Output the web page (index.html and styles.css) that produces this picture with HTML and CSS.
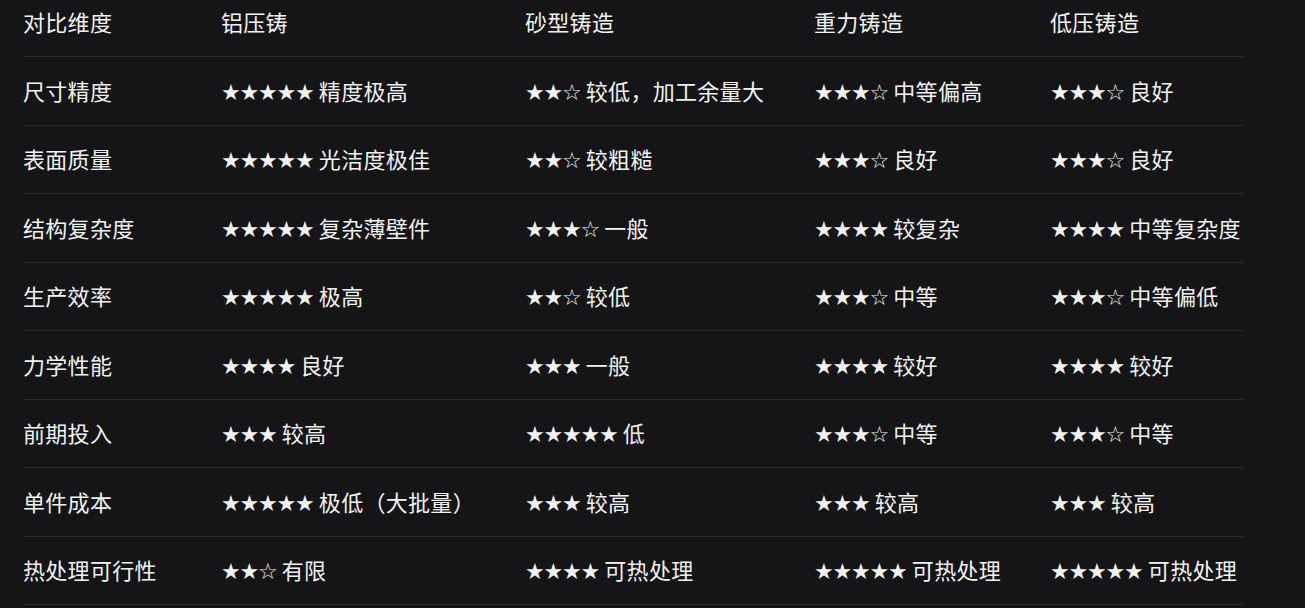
FILE: index.html
```html
<!DOCTYPE html>
<html lang="zh-CN">
<head>
<meta charset="utf-8">
<title>铸造工艺对比</title>
<link rel="stylesheet" href="styles.css">
</head>
<body>
<div class="page">
<table class="cmp">
  <colgroup>
    <col class="c1"><col class="c2"><col class="c3"><col class="c4"><col class="c5">
  </colgroup>
  <thead>
    <tr><th>对比维度</th><th>铝压铸</th><th>砂型铸造</th><th>重力铸造</th><th>低压铸造</th></tr>
  </thead>
  <tbody>
    <tr><td>尺寸精度</td><td><span class="s">★★★★★</span> 精度极高</td><td><span class="s">★★☆</span> 较低，加工余量大</td><td><span class="s">★★★☆</span> 中等偏高</td><td><span class="s">★★★☆</span> 良好</td></tr>
    <tr><td>表面质量</td><td><span class="s">★★★★★</span> 光洁度极佳</td><td><span class="s">★★☆</span> 较粗糙</td><td><span class="s">★★★☆</span> 良好</td><td><span class="s">★★★☆</span> 良好</td></tr>
    <tr><td>结构复杂度</td><td><span class="s">★★★★★</span> 复杂薄壁件</td><td><span class="s">★★★☆</span> 一般</td><td><span class="s">★★★★</span> 较复杂</td><td><span class="s">★★★★</span> 中等复杂度</td></tr>
    <tr><td>生产效率</td><td><span class="s">★★★★★</span> 极高</td><td><span class="s">★★☆</span> 较低</td><td><span class="s">★★★☆</span> 中等</td><td><span class="s">★★★☆</span> 中等偏低</td></tr>
    <tr><td>力学性能</td><td><span class="s">★★★★</span> 良好</td><td><span class="s">★★★</span> 一般</td><td><span class="s">★★★★</span> 较好</td><td><span class="s">★★★★</span> 较好</td></tr>
    <tr><td>前期投入</td><td><span class="s">★★★</span> 较高</td><td><span class="s">★★★★★</span> 低</td><td><span class="s">★★★☆</span> 中等</td><td><span class="s">★★★☆</span> 中等</td></tr>
    <tr><td>单件成本</td><td><span class="s">★★★★★</span> 极低（大批量）</td><td><span class="s">★★★</span> 较高</td><td><span class="s">★★★</span> 较高</td><td><span class="s">★★★</span> 较高</td></tr>
    <tr><td>热处理可行性</td><td><span class="s">★★☆</span> 有限</td><td><span class="s">★★★★</span> 可热处理</td><td><span class="s">★★★★★</span> 可热处理</td><td><span class="s">★★★★★</span> 可热处理</td></tr>
  </tbody>
</table>
</div>
</body>
</html>
```
FILE: styles.css
```css
html, body {
  margin: 0;
  padding: 0;
  background: #151517;
}
.page {
  padding: 0 0 0 23px;
  width: 1220px;
}
.cmp {
  width: 1220px;
  border-collapse: collapse;
  table-layout: fixed;
  color: #f2f2f2;
  font-family: "Noto Sans CJK SC", "Noto Sans", sans-serif;
  font-size: 22px;
}
.c1 { width: 198px; }
.c2 { width: 304px; }
.c3 { width: 289px; }
.c4 { width: 236px; }
.c5 { width: 193px; }
.cmp th, .cmp td {
  text-align: left;
  font-weight: 400;
  padding: 17.5px 0 18.5px;
  line-height: 31.5px;
  height: 31.5px;
  white-space: nowrap;
  border-bottom: 1px solid #2a2a2d;
  letter-spacing: 0.3px;
}
.cmp th {
  padding-top: 6px;
  padding-bottom: 18.5px;
}
.s {
  font-family: "DejaVu Sans", sans-serif;
  font-size: 22px;
  line-height: 1;
  letter-spacing: -1.2px;
}
```
